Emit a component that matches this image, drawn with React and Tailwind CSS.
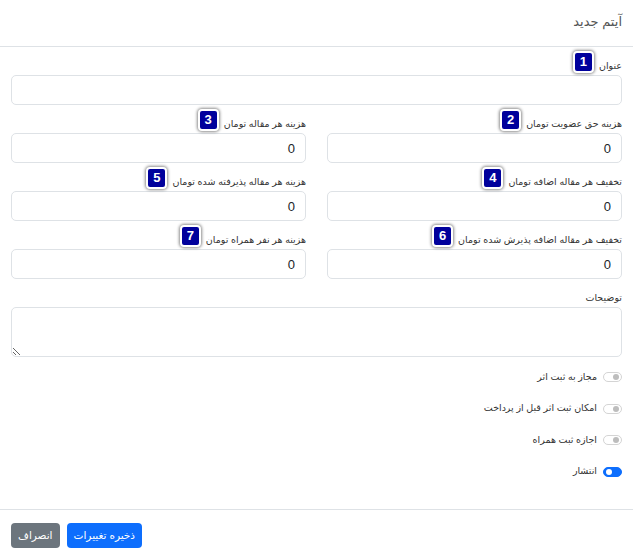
import React, { useState } from "react";

const FONT = { fontFamily: '"Liberation Sans", "DejaVu Sans", sans-serif' };

const Badge = ({ n }) => (
  <span className="relative -top-[5px] inline-flex items-center justify-center w-[21px] h-[22px] rounded-[4px] border-2 border-white bg-[#00009c] text-white text-[13px] font-bold shadow-[0_0_3px_1px_rgba(0,0,0,0.45)] leading-none">
    {n}
  </span>
);

const Field = ({ label, badge, value }) => (
  <div className="flex flex-col">
    <div className="flex items-center gap-[5px] h-[17px]">
      <span className="text-[9.5px] text-[#333]">{label}</span>
      {badge && <Badge n={badge} />}
    </div>
    <input
      type="text"
      defaultValue={value}
      className="h-[30px] w-full rounded-[5px] border border-[#dee2e6] px-[10px] text-[13px] text-[#212529] outline-none"
    />
  </div>
);

const Toggle = ({ label, on }) => {
  const [checked, setChecked] = useState(on);
  return (
    <div className="flex items-center gap-[6px] h-[12px]">
      <button
        type="button"
        onClick={() => setChecked(!checked)}
        className={`flex items-center w-[19px] h-[10px] rounded-full border px-[2px] ${
          checked
            ? "bg-[#0d6efd] border-[#0d6efd] justify-end"
            : "bg-white border-[#d4d4d4] justify-start"
        }`}
      >
        <span
          className={`w-[6px] h-[6px] rounded-full ${
            checked ? "bg-white" : "bg-[#bdbdbd]"
          }`}
        />
      </button>
      <span className="text-[9.5px] text-[#333]">{label}</span>
    </div>
  );
};

export default function App() {
  return (
    <div dir="rtl" style={FONT} className="w-[633px] h-[558px] bg-white flex flex-col">
      {/* Header */}
      <div className="h-[47px] border-b border-[#dee2e6] flex items-center px-[11px]">
        <h5 className="text-[13px] text-[#555] -mt-[2px]">آیتم جدید</h5>
      </div>

      {/* Body */}
      <div className="flex-1 px-[11px] pt-[11px]">
        <Field label="عنوان" badge="1" value="" />

        <div className="grid grid-cols-2 gap-x-[21px] gap-y-[11px] mt-[11px]">
          <Field label="هزینه حق عضویت تومان" badge="2" value="0" />
          <Field label="هزینه هر مقاله تومان" badge="3" value="0" />
          <Field label="تخفیف هر مقاله اضافه تومان" badge="4" value="0" />
          <Field label="هزینه هر مقاله پذیرفته شده تومان" badge="5" value="0" />
          <Field label="تخفیف هر مقاله اضافه پذیرش شده تومان" badge="6" value="0" />
          <Field label="هزینه هر نفر همراه تومان" badge="7" value="0" />
        </div>

        <div className="flex flex-col mt-[11px]">
          <div className="flex items-center h-[17px]">
            <span className="text-[9.5px] text-[#333]">توضیحات</span>
          </div>
          <textarea className="h-[50px] w-full rounded-[5px] border border-[#dee2e6] px-[10px] py-[6px] text-[13px] outline-none" />
        </div>

        <div className="flex flex-col gap-[19.5px] mt-[14px]">
          <Toggle label="مجاز به ثبت اثر" on={false} />
          <Toggle label="امکان ثبت اثر قبل از پرداخت" on={false} />
          <Toggle label="اجازه ثبت همراه" on={false} />
          <Toggle label="انتشار" on={true} />
        </div>
      </div>

      {/* Footer */}
      <div className="h-[49px] border-t border-[#dee2e6] flex items-start justify-end gap-[7px] px-[11px] pt-[13px]">
        <button className="h-[25px] px-[7px] rounded-[4px] bg-[#0d6efd] text-white text-[10.5px]">
          ذخیره تغییرات
        </button>
        <button className="h-[25px] px-[7px] rounded-[4px] bg-[#6c757d] text-white text-[10.5px]">
          انصراف
        </button>
      </div>
    </div>
  );
}
